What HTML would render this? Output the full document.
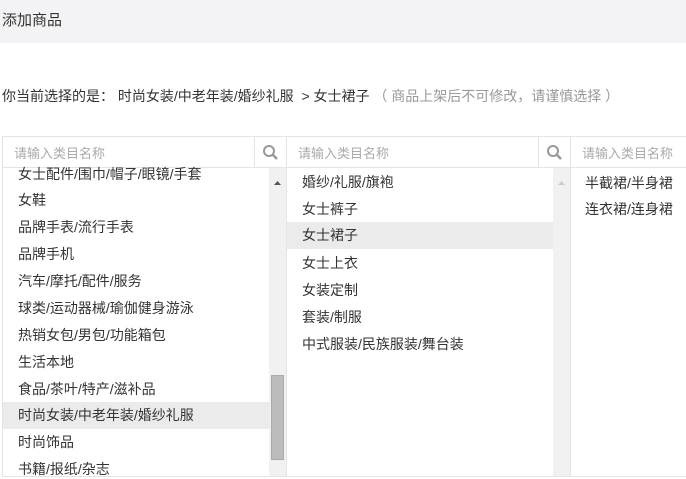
<!DOCTYPE html><html><head><meta charset="utf-8"><style>
*{margin:0;padding:0;box-sizing:border-box}
body{width:686px;height:479px;overflow:hidden;background:#fff;font-family:"Liberation Sans","Noto Sans CJK SC",sans-serif;font-size:14px;color:#333;position:relative}
.hd{position:absolute;left:0;top:0;width:686px;height:43px;background:#f3f3f5}
.hd span{position:absolute;left:2px;top:9px;font-size:15px;color:#333}
.bc{position:absolute;left:2px;top:86px;font-size:14px;color:#333;white-space:nowrap}
.bc i{font-style:normal;color:#999}
.p{position:absolute;top:136px;height:341px;border:1px solid #e4e4e4;overflow:hidden;background:#fff}
.s{position:absolute;left:0;top:0;right:0;height:31px;border-bottom:1px solid #e4e4e4;color:#aaa;padding:6px 0 0 11px;white-space:nowrap;font-size:13px}
.q{position:absolute;right:0;top:0;width:32px;height:31px;border-left:1px solid #e4e4e4}
.sb{position:absolute;right:0;top:31px;width:17px;bottom:0;background:#f1f1f1}
.it{position:absolute;left:0;height:27px;line-height:27px;white-space:nowrap}
.sel{background:#ebebeb}
</style></head><body>
<div class="hd"><span>添加商品</span></div>
<div class="bc">你当前选择的是： 时尚女装/中老年装/婚纱礼服 &nbsp;&gt; 女士裙子 <i>（ 商品上架后不可修改，请谨慎选择 ）</i></div>

<div class="p" style="left:2px;width:285px">
<div class="s">请输入类目名称<div class="q"><svg width="32" height="31"><circle cx="14" cy="14" r="5" fill="none" stroke="#999" stroke-width="2"/><path d="M18 18l4 4" stroke="#999" stroke-width="2.5"/></svg></div></div>
<div class="sb"><svg width="17" height="20" style="position:absolute;top:4px"><path d="M5 13l3.5-4 3.5 4z" fill="#555"/></svg><div style="position:absolute;left:2px;top:207px;width:13px;height:85px;background:#bcbcbc;border:1px solid #aaa"></div></div>
<div class="it" style="top:24px;left:15px">女士配件/围巾/帽子/眼镜/手套</div>
<div class="it" style="top:50px;left:15px">女鞋</div>
<div class="it" style="top:77px;left:15px">品牌手表/流行手表</div>
<div class="it" style="top:104px;left:15px">品牌手机</div>
<div class="it" style="top:131px;left:15px">汽车/摩托/配件/服务</div>
<div class="it" style="top:158px;left:15px">球类/运动器械/瑜伽健身游泳</div>
<div class="it" style="top:185px;left:15px">热销女包/男包/功能箱包</div>
<div class="it" style="top:212px;left:15px">生活本地</div>
<div class="it" style="top:239px;left:15px">食品/茶叶/特产/滋补品</div>
<div class="it sel" style="top:265px;left:0;width:267px;padding-left:15px">时尚女装/中老年装/婚纱礼服</div>
<div class="it" style="top:292px;left:15px">时尚饰品</div>
<div class="it" style="top:319px;left:15px">书籍/报纸/杂志</div>
</div>

<div class="p" style="left:286px;width:285px">
<div class="s">请输入类目名称<div class="q"><svg width="32" height="31"><circle cx="14" cy="14" r="5" fill="none" stroke="#999" stroke-width="2"/><path d="M18 18l4 4" stroke="#999" stroke-width="2.5"/></svg></div></div>
<div class="sb"><svg width="17" height="20" style="position:absolute;top:4px"><path d="M5 13l3.5-4 3.5 4z" fill="#ccc"/></svg></div>
<div class="it" style="top:32px;left:15px">婚纱/礼服/旗袍</div>
<div class="it" style="top:59px;left:15px">女士裤子</div>
<div class="it sel" style="top:85px;left:0;width:266px;padding-left:15px">女士裙子</div>
<div class="it" style="top:113px;left:15px">女士上衣</div>
<div class="it" style="top:140px;left:15px">女装定制</div>
<div class="it" style="top:167px;left:15px">套装/制服</div>
<div class="it" style="top:194px;left:15px">中式服装/民族服装/舞台装</div>
</div>

<div class="p" style="left:570px;width:130px">
<div class="s">请输入类目名称</div>
<div class="it" style="top:33px;left:14px">半截裙/半身裙</div>
<div class="it" style="top:59px;left:14px">连衣裙/连身裙</div>
</div>
</body></html>
